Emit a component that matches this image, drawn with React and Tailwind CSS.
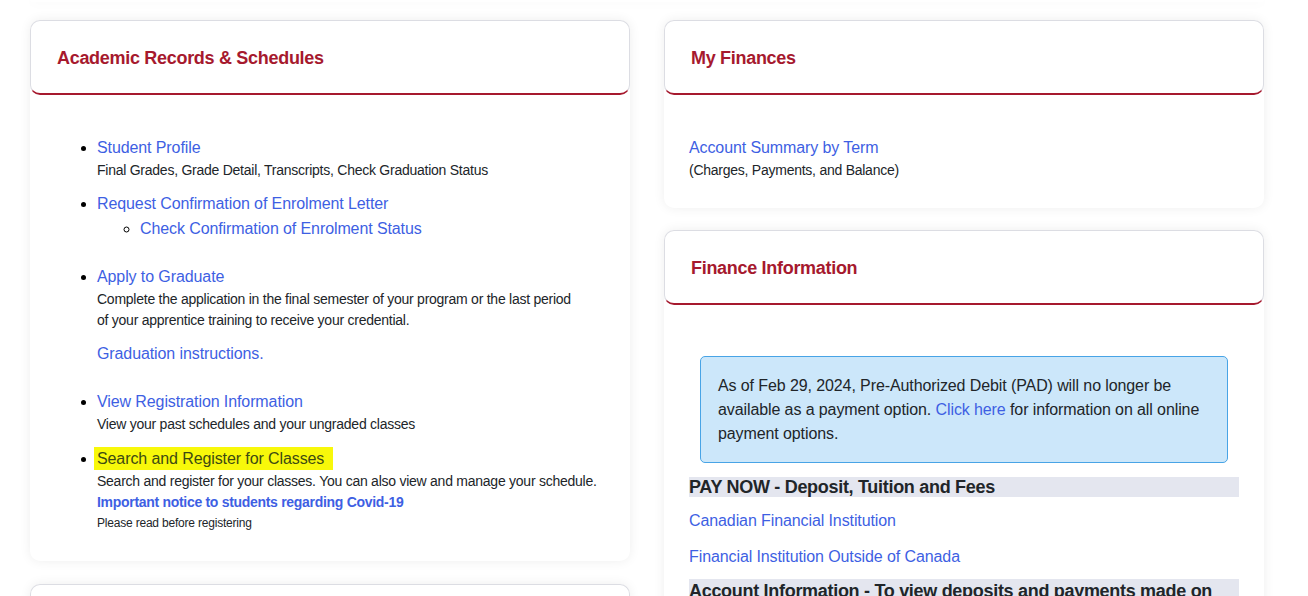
import React from "react";

const font = { fontFamily: '"Liberation Sans", Arial, sans-serif' };

function CardHeader({ title }) {
    return (
        <div className="h-[75px] flex items-center pt-[3px] px-[26px] rounded-[10px] border border-[#dcdde3] border-b-2 border-b-[#a6192e] bg-white">
            <h2 className="text-[18px] font-bold tracking-[-0.3px] text-[#a6192e]">{title}</h2>
        </div>
    );
}

function Card({ title, children, className = "" }) {
    return (
        <div className={"bg-white rounded-[10px] shadow-[0_0_12px_rgba(0,0,0,0.07)] " + className}>
            <CardHeader title={title} />
            {children}
        </div>
    );
}

const link = "text-[16px] leading-[24px] text-[#3e5fe3] tracking-[-0.1px]";
const desc = "text-[14px] leading-[21px] text-[#212529] tracking-[-0.25px]";

export default function App() {
    return (
        <div className="min-h-screen bg-white overflow-hidden" style={font}>
            <div className="pl-[30px] pr-[44px]">
                <div className="h-[2px] bg-white rounded-b-[10px] shadow-[0_0_12px_rgba(0,0,0,0.07)]"></div>
            </div>
            <div className="flex gap-[34px] pl-[30px] pr-[44px] pt-[18px]">
                <div className="w-[600px] flex flex-col gap-[23px]">
                    <Card title="Academic Records & Schedules">
                        <div className="pl-[27px] pr-[20px] pt-[41px] pb-[27px]">
                            <ul className="list-disc pl-[40px]">
                                <li className="mb-[11px]">
                                    <a className={link}>Student Profile</a>
                                    <div className={desc}>Final Grades, Grade Detail, Transcripts, Check Graduation Status</div>
                                </li>
                                <li className="mb-[24px]">
                                    <a className={link}>Request Confirmation of Enrolment Letter</a>
                                    <ul className="list-[circle] pl-[43px] pt-[1px]">
                                        <li>
                                            <a className={link}>Check Confirmation of Enrolment Status</a>
                                        </li>
                                    </ul>
                                </li>
                                <li className="mb-[24px]">
                                    <a className={link}>Apply to Graduate</a>
                                    <div className={desc + " max-w-[488px]"}>
                                        Complete the application in the final semester of your program or the last period of your apprentice training to receive your credential.
                                    </div>
                                    <p className={link + " mt-[11px]"}>Graduation instructions.</p>
                                </li>
                                <li className="mb-[12px]">
                                    <a className={link}>View Registration Information</a>
                                    <div className={desc}>View your past schedules and your ungraded classes</div>
                                </li>
                                <li>
                                    <a className="text-[16px] leading-[24px] tracking-[-0.1px] text-[#3d4a12] bg-[#f8f80a] pl-[3px] pr-[9px] -ml-[3px] py-[3px]">
                                        Search and Register for Classes
                                    </a>
                                    <div className={desc}>Search and register for your classes. You can also view and manage your schedule.</div>
                                    <div className="text-[14px] leading-[21px] font-bold text-[#3e5fe3] tracking-[-0.3px]">
                                        Important notice to students regarding Covid-19
                                    </div>
                                    <div className="text-[12px] leading-[21px] text-[#212529] tracking-[-0.2px]">Please read before registering</div>
                                </li>
                            </ul>
                        </div>
                    </Card>
                    <Card title="Student Services" />
                </div>

                <div className="w-[600px] flex flex-col gap-[22px]">
                    <Card title="My Finances">
                        <div className="px-[25px] pt-[41px] pb-[27px]">
                            <a className={link + " block"}>Account Summary by Term</a>
                            <div className={desc}>(Charges, Payments, and Balance)</div>
                        </div>
                    </Card>
                    <Card title="Finance Information">
                        <div className="px-[25px] pt-[51px] pb-[27px]">
                            <div className="mx-[11px] bg-[#cce7fa] border border-[#48a4e6] rounded-[5px] pl-[17px] pr-[16px] pt-[17px] pb-[16px] text-[16px] leading-[24px] text-[#212529] tracking-[-0.1px]">
                                As of Feb 29, 2024, Pre-Authorized Debit (PAD) will no longer be available as a payment option.{" "}
                                <a className="text-[#3e5fe3]">Click here</a> for information on all online payment options.
                            </div>
                            <h3 className="mt-[14px] bg-[#e4e6ef] text-[18px] leading-[20px] font-bold text-[#212529] tracking-[-0.3px]">
                                PAY NOW - Deposit, Tuition and Fees
                            </h3>
                            <a className={link + " block mt-[12px]"}>Canadian Financial Institution</a>
                            <a className={link + " block mt-[12px]"}>Financial Institution Outside of Canada</a>
                            <h3 className="mt-[10px] bg-[#e4e6ef] text-[18px] leading-[24px] font-bold text-[#212529] tracking-[-0.3px]">
                                Account Information - To view deposits and payments made on your account
                            </h3>
                        </div>
                    </Card>
                </div>
            </div>
        </div>
    );
}
